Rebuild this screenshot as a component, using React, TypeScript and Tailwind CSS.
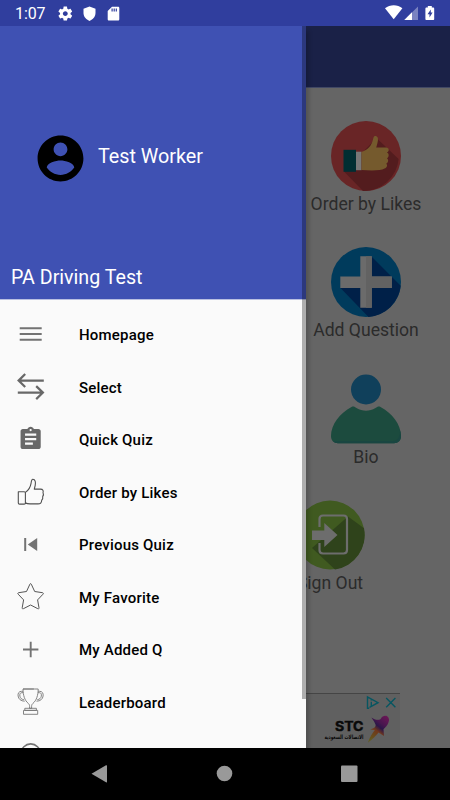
import React from "react";

type IconName = "menu" | "swap" | "clipboard" | "thumb" | "previous" | "star" | "plus" | "trophy" | "circle";

function MenuIcon({ name }: { name: IconName }) {
  return (
    <svg className="block h-[28px] w-[28px] shrink-0" viewBox="0 0 28 28" fill="none" stroke="#737373">
      {name === "menu" && <path d="M2.700 7.200h22M2.700 13h22M2.700 18.700h22" strokeWidth="2" />}
      {name === "swap" && (
        <path d="M1.800 7.600h25M8.200 1 1.600 7.600l6.600 6.400M.8 19.600h25M19.200 13.100l6.700 6.500-6.700 6.500" strokeWidth="2.200" stroke="#686868" />
      )}
      {name === "clipboard" && (
        <g transform="translate(.2 -.4) scale(1.12)" stroke="none" fill="#686868">
          <path d="M19 3h-4.180C14.400 1.840 13.300 1 12 1c-1.300 0-2.400.84-2.820 2H5c-1.100 0-2 .9-2 2v14c0 1.100.9 2 2 2h14c1.100 0 2-.9 2-2V5c0-1.100-.9-2-2-2zm-7 0c.55 0 1 .45 1 1s-.45 1-1 1-1-.45-1-1 .45-1 1-1zm2 14H7v-2h7v2zm3-4H7v-2h10v2zm0-4H7V7h10v2z" />
        </g>
      )}
      {name === "thumb" && (
        <path
          d="M1.400 13.800h5.800c.8 0 1.200.5 1.200 1.200v9.900c0 .7-.5 1.200-1.200 1.200H2.600c-.7 0-1.300-.5-1.300-1.200V13.800ZM8.400 14.400c3.200-2.200 5-5 5.700-9.300.3-2 .3-3.800 1.700-3.900 2.500-.1 3 3.300 2.400 6.100l-.9 3.800h6.200c2.500 0 3.100 1.800 2.500 3.500.7 1.400.4 2.900-.3 4 .3 1.500-.1 2.900-1 3.600-.1 2.300-1.400 3.700-3.700 3.700H13c-1.900 0-3.200-.2-4.600-1.200"
          strokeWidth="1.100"
          stroke="#505050"
          strokeLinejoin="round"
        />
      )}
      {name === "previous" && (
        <g stroke="none" fill="#737373">
          <path d="M7.200 7h2v13h-2zM20.200 7v13l-9.400-6.500z" />
        </g>
      )}
      {name === "star" && (
        <path
          d="M12.900 1.200c.4-.8 1-.8 1.400 0l3.400 7.300 7.800 1.200c.9.100 1.200.9.500 1.500l-5.400 5.700 1.400 7.900c.1.900-.5 1.300-1.200.9l-7.200-3.700-7.200 3.700c-.7.400-1.300 0-1.200-.9l1.400-7.900-5.400-5.700c-.7-.6-.4-1.400.5-1.500l7.800-1.200Z"
          strokeWidth="1"
          stroke="#555"
          strokeLinejoin="round"
        />
      )}
      {name === "plus" && <path d="M13.700 5.800v15.400M6 13.500h15.400" strokeWidth="1.900" />}
      {name === "trophy" && (
        <g stroke="#777" strokeWidth=".9" transform="translate(-.4 -.5)">
          <path d="M6.400 1.500h10.900m1 0h3.300c-.1 6-1.500 11.400-5.400 14.500-1.200 1-1.400 2.500-1.100 4.800h-2.200c.3-2.300.1-3.800-1.100-4.800C7.900 12.900 6.500 7.500 6.400 1.500ZM8.200 20.800h11.600v2.100H8.200zM6.900 22.900h14.200v3.900H6.900z" />
          <path d="M6.500 3.800H5C2.200 3.800 1.100 5.900 1.500 8.500c.4 3 2.600 5.100 6.600 5.200M6.600 5.200H5.200C3.500 5.200 2.900 6.700 3.300 8.700c.3 1.900 1.700 3.200 4 3.500M21.500 3.800H23c2.800 0 3.900 2.100 3.500 4.700-.4 3-2.600 5.100-6.600 5.200M21.400 5.200h1.400c1.700 0 2.300 1.500 1.900 3.500-.3 1.900-1.700 3.200-4 3.500" />
        </g>
      )}
      {name === "circle" && <circle cx="13.700" cy="12.500" r="9.600" strokeWidth="1.600" />}
    </svg>
  );
}

const menu: { icon: IconName; label: string }[] = [
  { icon: "menu", label: "Homepage" },
  { icon: "swap", label: "Select" },
  { icon: "clipboard", label: "Quick Quiz" },
  { icon: "thumb", label: "Order by Likes" },
  { icon: "previous", label: "Previous Quiz" },
  { icon: "star", label: "My Favorite" },
  { icon: "plus", label: "My Added Q" },
  { icon: "trophy", label: "Leaderboard" },
  { icon: "circle", label: "" },
];

function StatusBar() {
  return (
    <header className="flex h-[26px] shrink-0 items-center bg-[#303e9e] pl-[15px] pr-[14px] text-white">
      <span className="w-[42px] pt-[2px] text-[16px] leading-none tracking-[-0.1px]">1:07</span>
      <svg className="mt-px h-[16px] w-[66px]" viewBox="0 0 66 16" fill="white">
        <g transform="translate(-.1 -.8) scale(.7)">
          <path d="M19.430 12.980c.04-.32.070-.64.070-.98s-.030-.66-.070-.98l2.110-1.650c.19-.15.24-.42.12-.64l-2-3.460c-.12-.22-.39-.3-.61-.22l-2.490 1c-.52-.4-1.080-.73-1.690-.98l-.38-2.650C14.460 2.180 14.250 2 14 2h-4c-.25 0-.46.18-.49.42l-.38 2.650c-.61.25-1.170.59-1.690.98l-2.490-1c-.23-.09-.49 0-.61.22l-2 3.460c-.13.22-.07.49.12.64l2.110 1.650c-.04.32-.07.65-.07.98s.03.66.07.98l-2.110 1.650c-.19.15-.24.42-.12.64l2 3.460c.12.22.39.3.61.22l2.490-1c.52.4 1.080.73 1.690.98l.38 2.650c.03.24.24.42.49.42h4c.25 0 .46-.18.49-.42l.38-2.650c.61-.25 1.170-.59 1.690-.98l2.490 1c.23.09.49 0 .61-.22l2-3.460c.12-.22.07-.49-.12-.64l-2.110-1.650zM12 15.500c-1.930 0-3.500-1.570-3.500-3.500s1.570-3.500 3.500-3.500 3.500 1.570 3.500 3.500-1.570 3.500-3.500 3.500z" />
        </g>
        <path d="M32.500.5 38.500 2.800V7c0 3.600-2.500 6.600-6 7.900-3.500-1.300-6-4.300-6-7.900V2.800Z" />
        <path fillRule="evenodd" d="M55 .7h6c.8 0 1.300.5 1.300 1.300v11.200c0 .8-.5 1.300-1.300 1.300h-9c-.8 0-1.300-.5-1.300-1.300V5ZM54.500 2.500v3h1.200v-3Zm2.100 0v3h1.200v-3Zm2.100 0v3h1.200v-3Z" />
      </svg>
      <svg className="ml-auto h-[16px] w-[51px]" viewBox="0 0 51 16" fill="white">
        <path d="M0 3.300C5-.7 12.500-.7 17.400 3.300L8.700 14.200Z" />
        <path d="M33 1.500V15H19.300Z" opacity=".36" />
        <path d="M27 7.300V15h-7.700Z" />
        <path fillRule="evenodd" d="M42.800 1h4v1.400H48c.8 0 1.200.4 1.200 1.100v10.400c0 .7-.4 1.100-1.200 1.100h-6.400c-.8 0-1.200-.4-1.200-1.100V3.500c0-.7.4-1.100 1.200-1.100h1.200Zm3 3.500-3.300 4.800h2v3.200l3.100-4.900h-1.800Z" />
      </svg>
    </header>
  );
}

type TileName = "likes" | "add" | "bio" | "out";

function TileIcon({ name }: { name: TileName }) {
  return (
    <svg className="block h-[70px] w-[70px]" viewBox="0 0 70 70">
      {name === "likes" && (
        <>
          <circle cx="35" cy="35" r="35" fill="#692526" />
          <path d="M45.500 17 67.600 38A35 35 0 0 1 32 69.900L13 50.500Z" fill="#531c1e" />
          <path d="M12.500 28.800H25v22H12.500z" fill="#002e32" />
          <path d="M25 30.700h5.500v18.500H25z" fill="#777" />
          <path d="M30.500 31C37 28.500 40.500 25 42 18.500c.7-3.500 1.400-4.100 3.400-3.200 2.800 1.300 1.400 6.200-.2 11.300h10c3.100 0 3.500 4 .7 5 2.400.8 2.400 4.800 0 5.600 1.900 1 1.600 4.500-.7 5.300 1.700 1.600.7 4.500-1.700 5-3.600 2.400-13.600 2-23 1.600Z" fill="#755a2d" />
        </>
      )}
      {name === "add" && (
        <>
          <circle cx="35" cy="35" r="35" fill="#003b5c" />
          <path d="m40.500 9.500 29.200 29.200A35 35 0 0 1 37.500 70L9.500 41h20V30Z" fill="#002048" />
          <path d="M29.300 9.300h11.500v20.200h20V41h-20v19.800H29.300V41h-20V29.500h20z" fill="#6b6b6b" />
          <path d="M35 9.300h5.800v20.200h20V41h-20v19.800H35z" fill="#626262" />
        </>
      )}
      {name === "bio" && (
        <>
          <circle cx="35" cy="15.500" r="15" fill="#10405b" />
          <path d="M20.500 33c2-1 3.300 0 5 1 6 3.600 13 3.600 19 0 1.700-1 3-2 5-1C61 39 70 50.500 70 62c0 4.500-2.700 7.200-7 7.200H7C2.700 69.200 0 66.500 0 62c0-11.500 9-23 20.500-29Z" fill="#1c4b3e" />
          <path d="M68.500 55c1.500 7-1.500 12-7 12H2c1.200 1.500 2.800 2.200 5 2.200h56c4.300 0 7-2.700 7-7.200 0-2.400-.5-4.700-1.500-7Z" fill="#194641" />
        </>
      )}
      {name === "out" && (
        <>
          <circle cx="35" cy="35" r="34.500" fill="#405a20" />
          <path d="m53 16.500 16 11.800A35 35 0 0 1 40 69.600L17 48Z" fill="#2f431b" />
          <path d="M24.500 27V19q0-3.500 3.500-3.500h20.500q3.500 0 3.500 3.500v31q0 3.500-3.500 3.500H28q-3.500 0-3.500-3.500v-7" fill="none" stroke="#6d6d6d" strokeWidth="2.200" />
          <path d="M17 30.500h12.300V23L42.500 35 29.300 47v-7H17z" fill="#6d6d6d" />
        </>
      )}
    </svg>
  );
}

function Tile({ name, label }: { name: TileName; label: string }) {
  return (
    <div className="flex h-[126.600px] shrink-0 flex-col items-center">
      <TileIcon name={name} />
      <span className="whitespace-nowrap text-[17.600px] leading-[26px] text-[#2b2b2b]">{label}</span>
    </div>
  );
}

function Advertisement() {
  return (
    <aside className="ml-[50px] mt-auto flex h-[55px] w-[350px] shrink-0 justify-end border-t border-[#454545] bg-[#606060]">
      <div className="w-[5px] pt-[30px]">
        <i className="block h-[3px] w-[3px] rounded-full bg-[#28102e]" />
      </div>
      <div className="flex w-[61px] flex-col items-end pt-[26px] text-[#090909]">
        <svg className="h-[13px] w-[30px] overflow-visible" viewBox="0 0 30 13">
          <text x="1" y="10.500" textLength="28.500" lengthAdjust="spacingAndGlyphs" fontFamily="Inter, sans-serif" fontWeight="700" fontSize="13" fill="#090909" stroke="#090909" strokeWidth=".4">STC</text>
        </svg>
        <svg className="mt-px h-[9px] w-[40px] overflow-visible" viewBox="0 0 40 9">
          <text x="20" y="5" textAnchor="middle" direction="rtl" textLength="39" lengthAdjust="spacingAndGlyphs" fontFamily="DejaVu Sans, sans-serif" fontWeight="700" fontSize="6" fill="#090909">الاتصالات السعودية</text>
        </svg>
      </div>
      <svg className="h-[54px] w-[36px]" viewBox="0 0 36 54">
        <defs>
          <linearGradient id="bird" x1=".8" y1="0" x2=".2" y2="1">
            <stop stopColor="#671754" />
            <stop offset=".28" stopColor="#48174f" />
            <stop offset=".42" stopColor="#2b1548" />
            <stop offset=".58" stopColor="#70371d" />
            <stop offset="1" stopColor="#625c20" />
          </linearGradient>
          <filter id="soft"><feGaussianBlur stdDeviation=".7" /></filter>
        </defs>
        <path d="M7.500 23.500c3.500 2.500 6.500 3 9.200 1.500 1.500-3.500 6-4.200 7.700-1.500 1.800 3-.5 8-4.900 11.700L20 42l-5.500-3.500c-2.500 3.500-6 6.500-10.500 10 1.800-5.500 4.500-9.500 6.800-12.400l-4.600-.5c4-1.200 6-3 5.300-5.100-.6-2-2.300-4.400-4-7Z" fill="url(#bird)" filter="url(#soft)" />
      </svg>
      <svg className="-ml-[36px] mr-[2px] mt-[1px] h-[15px] w-[34px] shrink-0" viewBox="0 0 34 15" fill="none" stroke="#075661" strokeWidth="1.400">
        <path d="M5.500 12.300 14 7.700 3.500 2v11.300h1.700M7.300 6.800v4.400M7.300 4.200v1.200M22.200 3l9.200 9.200M31.400 3l-9.200 9.200" />
      </svg>
    </aside>
  );
}

function Drawer() {
  return (
    <nav className="absolute inset-y-0 left-0 flex w-[306px] flex-col overflow-hidden bg-[#fafafa] shadow-[3px_5px_4px_rgba(0,0,0,0.18)]">
      <div className="flex h-[274px] shrink-0 flex-col border-b border-[#b9bfe1] bg-[#3f51b3] text-white">
        <div className="flex h-[224px] pl-[33px] pt-[105px]">
          <svg className="block h-[55px] w-[55px]" viewBox="0 0 24 24" fill="black">
            <path d="M12 2C6.480 2 2 6.480 2 12s4.480 10 10 10 10-4.480 10-10S17.520 2 12 2zm0 3c1.660 0 3 1.340 3 3s-1.340 3-3 3-3-1.340-3-3 1.340-3 3-3zm0 14.200c-2.500 0-4.710-1.280-6-3.220.03-1.990 4-3.080 6-3.080 1.990 0 5.970 1.090 6 3.080-1.290 1.940-3.500 3.220-6 3.220z" />
          </svg>
          <span className="ml-[10px] mt-[12px] text-[19.750px] leading-[27px]">Test Worker</span>
        </div>
        <span className="ml-[11px] mt-[14px] text-[19.650px] leading-[28px]">PA Driving Test</span>
      </div>
      <ul className="pt-[8.700px]">
        {menu.map(({ icon, label }) => (
          <li key={icon} className="flex h-[52.500px] items-center pl-[17px]">
            <MenuIcon name={icon} />
            <span className="ml-[34px] pt-[0.800px] text-[15px] font-medium tracking-[0.200px] text-black">{label}</span>
          </li>
        ))}
      </ul>
      <div className="absolute right-0 top-0 h-[673px] w-[4px] bg-black/30" />
    </nav>
  );
}

export default function App() {
  return (
    <div className="flex h-[800px] w-[450px] flex-col overflow-hidden bg-black font-['Roboto',sans-serif]">
      <StatusBar />
      <div className="relative flex min-h-0 flex-1 flex-col overflow-hidden bg-[#656565]">
        <div className="h-[62px] shrink-0 border-b border-[#414865] bg-[#1a2147]" />
        <main className="flex min-h-0 flex-1 flex-col">
          <section className="ml-auto mr-[24px] flex w-[120px] flex-col pt-[32.500px]">
            <Tile name="likes" label="Order by Likes" />
            <Tile name="add" label="Add Question" />
            <Tile name="bio" label="Bio" />
            <div className="mr-[72px]"><Tile name="out" label="Sign Out" /></div>
          </section>
          <Advertisement />
        </main>
        <Drawer />
      </div>
      <footer className="flex h-[52px] shrink-0 items-center bg-black pl-[91px]">
        <svg className="h-[20px] w-[267px]" viewBox="0 0 267 20" fill="#999">
          <path d="M.5 9.800 15 1.300q1-.5 1 .5v16q0 1-1 .5Z" />
          <circle cx="133.500" cy="9.500" r="7.800" />
          <rect x="250" y="1.500" width="16.500" height="16.500" rx="1" />
        </svg>
      </footer>
    </div>
  );
}
